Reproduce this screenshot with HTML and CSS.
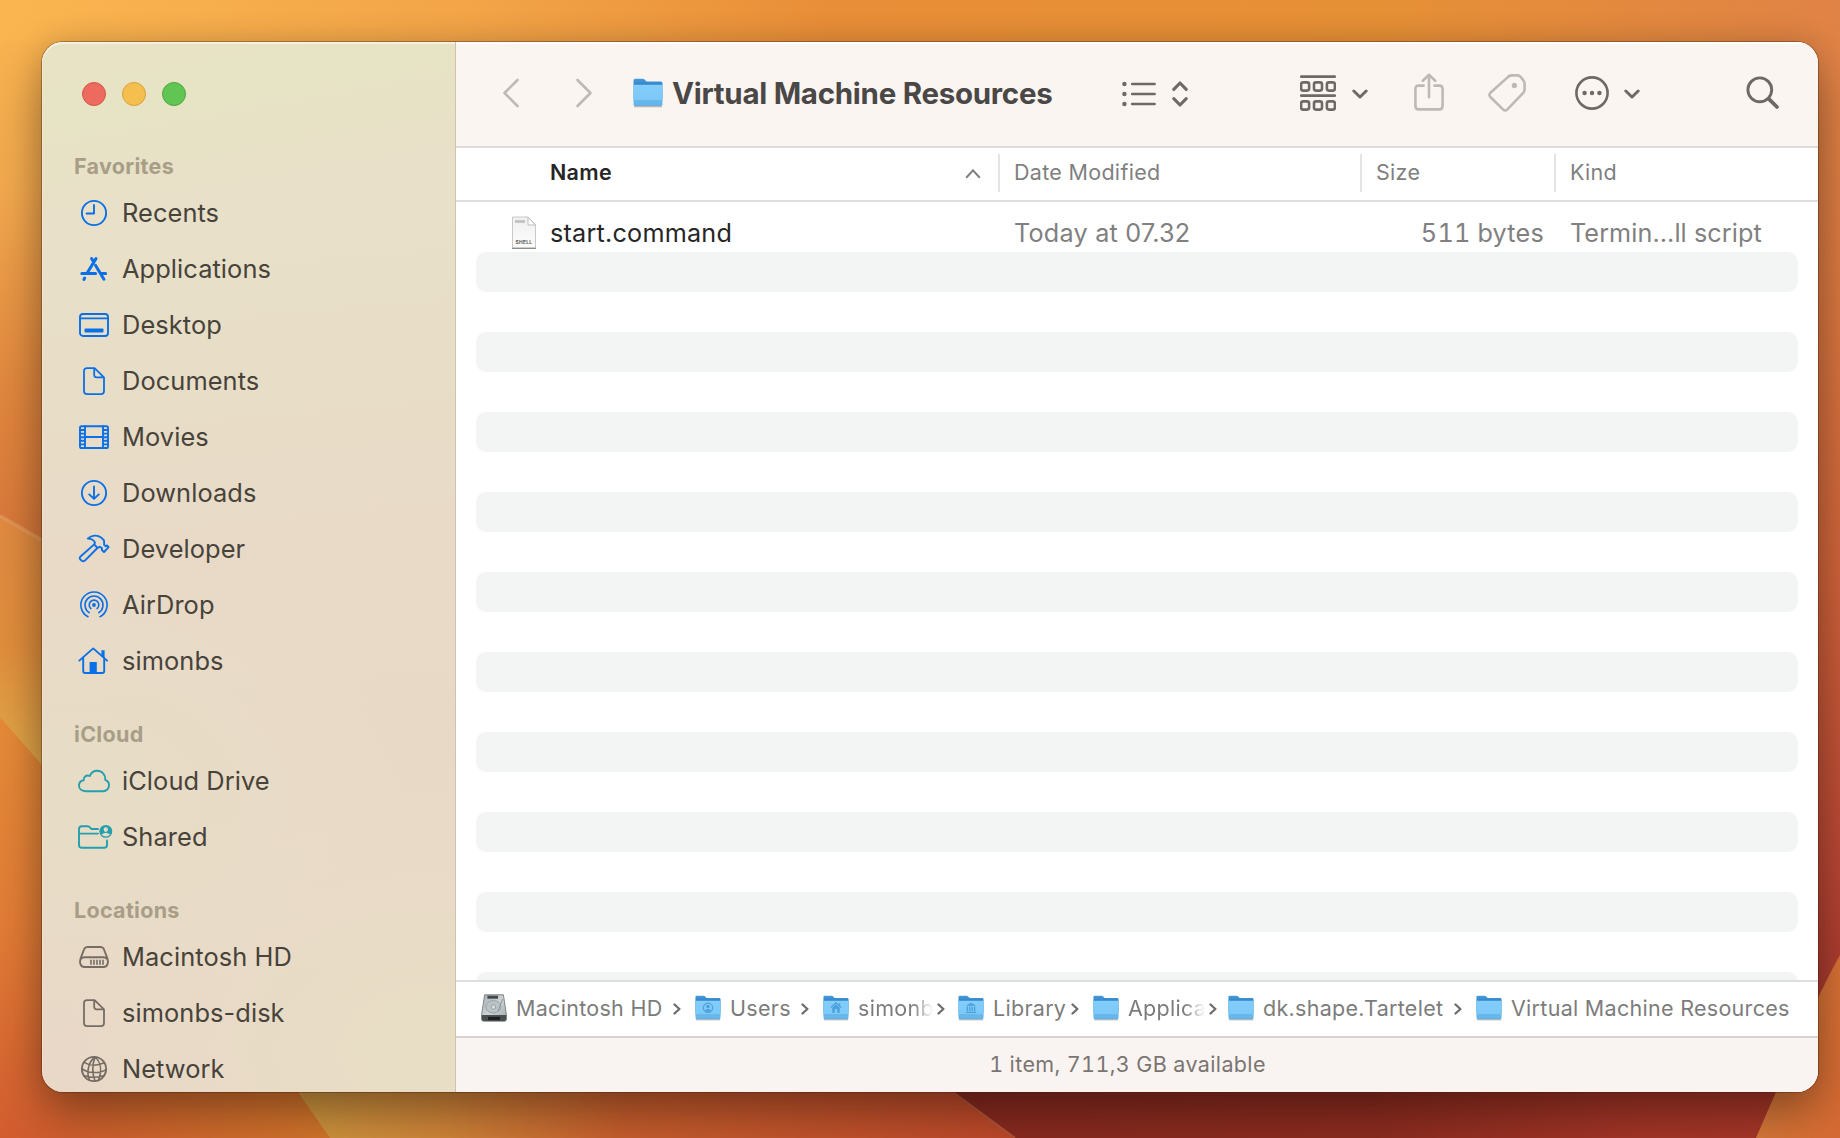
FILE: index.html
```html
<!DOCTYPE html>
<html lang="en">
<head>
<meta charset="utf-8">
<title>Virtual Machine Resources</title>
<link rel="stylesheet" href="styles.css">
</head>
<body>
<svg class="wallpaper" viewBox="0 0 1840 1138" preserveAspectRatio="none" aria-hidden="true">
  <defs>
    <linearGradient id="wp-top" x1="0" y1="0" x2="1840" y2="0" gradientUnits="userSpaceOnUse">
      <stop offset="0" stop-color="#fab550"/><stop offset=".25" stop-color="#f3a548"/><stop offset=".45" stop-color="#e88e38"/><stop offset=".75" stop-color="#e69036"/><stop offset="1" stop-color="#e08346"/>
    </linearGradient>
    <linearGradient id="wp-left" x1="0" y1="0" x2="0" y2="540" gradientUnits="userSpaceOnUse">
      <stop offset="0" stop-color="#fab550"/><stop offset=".35" stop-color="#f3a94e"/><stop offset=".7" stop-color="#e2893f"/><stop offset="1" stop-color="#d8783a"/>
    </linearGradient>
    <linearGradient id="wp-band" x1="0" y1="510" x2="0" y2="780" gradientUnits="userSpaceOnUse">
      <stop offset="0" stop-color="#e28a42"/><stop offset=".5" stop-color="#e08e3c"/><stop offset="1" stop-color="#e3ac4c"/>
    </linearGradient>
    <linearGradient id="wp-low" x1="0" y1="720" x2="0" y2="1138" gradientUnits="userSpaceOnUse">
      <stop offset="0" stop-color="#e68b38"/><stop offset=".5" stop-color="#e27c36"/><stop offset="1" stop-color="#d35d2f"/>
    </linearGradient>
    <linearGradient id="wp-lowx" x1="0" y1="0" x2="340" y2="0" gradientUnits="userSpaceOnUse">
      <stop offset=".1" stop-color="#d8792c" stop-opacity="0"/><stop offset="1" stop-color="#d8792c"/>
    </linearGradient>
    <linearGradient id="wp-gold" x1="300" y1="0" x2="1020" y2="0" gradientUnits="userSpaceOnUse">
      <stop offset="0" stop-color="#d49a40"/><stop offset=".2" stop-color="#d5883a"/><stop offset=".45" stop-color="#cc602e"/><stop offset="1" stop-color="#c24a2b"/>
    </linearGradient>
    <linearGradient id="wp-red" x1="950" y1="0" x2="1800" y2="0" gradientUnits="userSpaceOnUse">
      <stop offset="0" stop-color="#8c2b20"/><stop offset=".5" stop-color="#912d20"/><stop offset=".8" stop-color="#a83628"/><stop offset="1" stop-color="#ab3829"/>
    </linearGradient>
    <linearGradient id="wp-right" x1="0" y1="0" x2="0" y2="1138" gradientUnits="userSpaceOnUse">
      <stop offset="0" stop-color="#e28648"/><stop offset=".25" stop-color="#dd7a42"/><stop offset=".5" stop-color="#d2653b"/><stop offset=".75" stop-color="#bb4835"/><stop offset=".9" stop-color="#a8372e"/>
    </linearGradient>
    <linearGradient id="wp-orange" x1="1760" y1="1120" x2="1840" y2="1138" gradientUnits="userSpaceOnUse">
      <stop offset="0" stop-color="#dc7c3c"/><stop offset=".4" stop-color="#dc7436"/><stop offset="1" stop-color="#d86a34"/>
    </linearGradient>
  </defs>
  <rect width="1840" height="600" fill="url(#wp-top)"/>
  <path d="M0 42H60V600H0z" fill="url(#wp-left)"/>
  <path d="M1800 42H1840V1138H1800z" fill="url(#wp-right)"/>
  <path d="M0 515L42 539L120 590V900H0z" fill="url(#wp-band)"/>
  <path d="M0 516L42 540" stroke="#e6a266" stroke-opacity=".5" stroke-width="4"/>
  <path d="M0 717L42 765L300 1092L332 1138H0z" fill="url(#wp-low)"/>
  <path d="M0 1080H324L332 1138H0z" fill="url(#wp-lowx)"/>
  <path d="M270 1050L298 1092L330 1138H1100V1050z" fill="url(#wp-gold)"/>
  <path d="M900 1050L953 1092L1015 1138H1805V1050z" fill="url(#wp-red)"/>
  <path d="M953 1092L1015 1138" stroke="#b8583a" stroke-width="2"/>
  <path d="M1840 955C1815 1000 1790 1060 1756 1138H1840z" fill="url(#wp-orange)"/>
</svg>

<svg class="symbols" aria-hidden="true">
  <defs>
    <linearGradient id="folder-back" x1="0" y1="0" x2="0" y2="1"><stop offset="0" stop-color="#4a9cda"/><stop offset=".3" stop-color="#2f83c8"/></linearGradient>
    <linearGradient id="folder-front" x1="0" y1="0" x2="0" y2="1"><stop offset="0" stop-color="#82cdfa"/><stop offset=".75" stop-color="#7cc8f7"/><stop offset=".8" stop-color="#6ab9ec"/><stop offset="1" stop-color="#62b2e8"/></linearGradient>
    <linearGradient id="paper" x1="0" y1="0" x2="0" y2="1"><stop offset="0" stop-color="#f0f0f0"/><stop offset="1" stop-color="#fdfdfd"/></linearGradient>
    <linearGradient id="metal" x1="0" y1="0" x2="1" y2="1"><stop offset="0" stop-color="#a9b0b3"/><stop offset=".5" stop-color="#cdd3d6"/><stop offset="1" stop-color="#a2a9ad"/></linearGradient>
    <symbol id="folder" viewBox="0 0 28 28">
      <path d="M1 26.6H27" stroke="#8f8a88" stroke-opacity=".6" stroke-width="1.4"/>
      <path d="M.5 2.2Q.5.8 2 .8H9.2Q10.4.8 11.2 1.8L12.6 3.2H26Q27.5 3.2 27.5 4.6V20H.5z" fill="url(#folder-back)"/>
      <path d="M.5 6.2H27.5V24.6Q27.5 26.2 26 26.2H2Q.5 26.2.5 24.6z" fill="url(#folder-front)"/>
      <path d="M.5 21.4H27.5" stroke="#58a8df" stroke-width=".8"/>
    </symbol>
    <symbol id="chev-down" viewBox="0 0 16 10"><path d="M1.8 2L8 8L14.2 2" fill="none" stroke="currentColor" stroke-width="3" stroke-linecap="round" stroke-linejoin="round"/></symbol>
    <symbol id="crumb-sep" viewBox="0 0 8 12"><path d="M1.5 1.5L6.4 6L1.5 10.5" fill="none" stroke="currentColor" stroke-width="2.3" stroke-linecap="round" stroke-linejoin="round"/></symbol>
    <symbol id="doc" viewBox="0 0 32 32"><path d="M9.2 2.8H16.6L26 12V25.6Q26 28.8 23 28.8H9.2Q6 28.8 6 25.6V5.8Q6 2.8 9.2 2.8zM16.2 3V9.8Q16.2 12 18.4 12H26" transform="translate(0 .3)" fill="none" stroke="currentColor" stroke-width="1.8" stroke-linejoin="round"/></symbol>
  </defs>
</svg>

<main class="window">
  <aside class="sidebar">
    <div class="lights"><i class="light light-close"></i><i class="light light-min"></i><i class="light light-zoom"></i></div>

    <h2 class="group-title">Favorites</h2>
    <ul class="group blue">
      <li class="place"><svg class="icon" viewBox="0 0 32 32"><circle cx="16" cy="16" r="12.1"/><path d="M16 8V16.5H8.6"/></svg><span>Recents</span></li>
      <li class="place"><svg class="icon" viewBox="0 0 32 32"><path class="bold" d="M3.8 20.6H17.6M22.5 20.6H27.6M18 5.6L9.2 20M13.6 5.6L15.8 9M17.6 12.4L25.9 26.2M6.7 25L5.9 26.4"/></svg><span>Applications</span></li>
      <li class="place"><svg class="icon" viewBox="0 0 32 32"><rect x="2" y="5" width="28" height="22" rx="3"/><path d="M2 9.4H30"/><rect class="solid" x="6.5" y="19.4" width="19" height="4" rx="1"/></svg><span>Desktop</span></li>
      <li class="place"><svg class="icon"><use href="#doc"/></svg><span>Documents</span></li>
      <li class="place"><svg class="icon" viewBox="0 0 32 32"><rect x="2" y="5.2" width="28" height="21.8" rx="1.6"/><path d="M7 5V27M25 5V27M7 16H25M2 9H7M2 12.6H7M2 16.2H7M2 19.8H7M2 23.4H7M25 9H30M25 12.6H30M25 16.2H30M25 19.8H30M25 23.4H30"/></svg><span>Movies</span></li>
      <li class="place"><svg class="icon" viewBox="0 0 32 32"><circle cx="16" cy="16" r="12.1"/><path d="M16 9.5V21.6M11.2 17.4L16 21.9L20.8 17.4"/></svg><span>Downloads</span></li>
      <li class="place"><svg class="icon" viewBox="0 0 32 32"><path d="M9.8 5.6C13.6 1.8 19.6 1.8 23 4.4L26 7.4L26.2 12L27.8 13.2L29 12.4L30.6 14.2L26 19L23.9 17L24 15.2L21.8 13.8L19.4 15L7.4 27.2Q5.4 29.3 3.4 27.4L2.4 26.6Q.8 25 2.8 23.2L16.2 11.4L17 9.4C15.4 6.6 12.6 5.6 9.8 5.6zM16.2 11.4L19.6 15"/></svg><span>Developer</span></li>
      <li class="place"><svg class="icon" viewBox="0 0 32 32"><circle class="solid" cx="16" cy="16" r="1.9"/><path class="thin" d="M12.9 19.6A4.8 4.8 0 1 1 19.1 19.6M11.2 23.6A9 9 0 1 1 20.8 23.6M10 27.7A13.1 13.1 0 1 1 22 27.7"/></svg><span>AirDrop</span></li>
      <li class="place"><svg class="icon" viewBox="0 0 32 32"><path d="M1.3 15.6L15.2 3.4L29.1 15.6M5.2 13V26Q5.2 28 7.2 28H24.2Q26.2 28 26.2 26V13"/><path class="solid" d="M11.6 17H18.8V28H11.6zM23.4 5.2H26.6V13.4L23.4 10.6z"/></svg><span>simonbs</span></li>
    </ul>

    <h2 class="group-title">iCloud</h2>
    <ul class="group teal">
      <li class="place"><svg class="icon" viewBox="0 0 32 32"><path d="M7.6 26.2C3.6 26.2 1 23.8 1 20.6C1 17.6 3 15.6 5.6 15.2C5.4 11.6 9 9.4 11.8 11C13.2 7.6 15.8 5.8 19 5.8C24.2 5.8 27.6 9.8 27.2 14.8C29.6 15.6 31 17.8 31 20.2C31 23.6 28.4 26.2 25 26.2z"/></svg><span>iCloud Drive</span></li>
      <li class="place"><svg class="icon icon-wide" viewBox="0 0 36 32"><path d="M20 8H13.6L11 5.6Q10.4 5.2 9.6 5.2H3.8Q1 5.2 1 8V24Q1 26.8 3.8 26.8H26Q29 26.8 29 24V19.4M1 12.6H20"/><circle class="solid" cx="27.8" cy="10.4" r="6.4"/><path class="cut" d="M27.8 6.2a2.2 2.4 0 1 1 0 4.8a2.2 2.4 0 1 1 0-4.8zM23.4 13.8Q27.8 9.6 32.2 13.8Q27.8 17 23.4 13.8z"/></svg><span>Shared</span></li>
    </ul>

    <h2 class="group-title">Locations</h2>
    <ul class="group gray">
      <li class="place"><svg class="icon" viewBox="0 0 32 32"><path d="M9.2 6H22.8Q24.8 6 25.8 8L29.4 17.4C30.8 21.8 29.4 26 25.6 26H6.4C2.6 26 1.2 21.8 2.6 17.4L6.2 8Q7.2 6 9.2 6zM3 18Q4.4 16.2 6.6 16.2H25.4Q27.6 16.2 29 18"/><path class="thin" d="M13 19.2V23.2M16 19.2V23.2M19 19.2V23.2M22 19.2V23.2M25 19.2V23.2"/></svg><span>Macintosh HD</span></li>
      <li class="place"><svg class="icon"><use href="#doc"/></svg><span>simonbs-disk</span></li>
      <li class="place"><svg class="icon" viewBox="0 0 32 32"><circle cx="16" cy="16" r="12.1"/><path class="thin" d="M17 4C10 9 8.4 20 11.4 27M17 4C14 12 14.4 21 17 28M17 4C23 9 24 18 20.4 27.6M6 9.4C12 13 20 12.6 26.4 9.8M4 15.6C10 20.6 22 20.8 28 16.6M5.8 22.4C12 24.6 20 24.8 26.2 22.6"/></svg><span>Network</span></li>
    </ul>
  </aside>

  <section class="content">
    <header class="toolbar">
      <svg class="tb nav-back dim" viewBox="0 0 18 30"><path d="M15.5 2L2.5 15L15.5 28"/></svg>
      <svg class="tb nav-next dim" viewBox="0 0 18 30"><path d="M2.5 2L15.5 15L2.5 28"/></svg>
      <svg class="title-folder"><use href="#folder"/></svg>
      <h1 class="title"><span>Virtual Machine Resources</span></h1>
      <svg class="tb view-list" viewBox="0 0 34 26"><path d="M10.2 3H32.6M10.2 13H32.6M10.2 23H32.6"/><circle class="solid" cx="2.4" cy="3" r="2.2"/><circle class="solid" cx="2.4" cy="13" r="2.2"/><circle class="solid" cx="2.4" cy="23" r="2.2"/></svg>
      <svg class="tb view-updown heavy" viewBox="0 0 16 26"><path d="M1.8 8.4L8 2L14.2 8.4M1.8 17.6L8 24L14.2 17.6"/></svg>
      <svg class="tb view-group" viewBox="0 0 36 36"><path d="M1.2 1.6H34.8M1.2 20.6H34.8"/><rect x="1.1" y="7.4" width="8" height="8.2" rx="2"/><rect x="14" y="7.4" width="8" height="8.2" rx="2"/><rect x="26.9" y="7.4" width="8" height="8.2" rx="2"/><rect x="1.1" y="26.4" width="8" height="8.2" rx="2"/><rect x="14" y="26.4" width="8" height="8.2" rx="2"/><rect x="26.9" y="26.4" width="8" height="8.2" rx="2"/></svg>
      <svg class="tb chev chev-group"><use href="#chev-down"/></svg>
      <svg class="tb share dim" viewBox="0 0 30 38"><path d="M9.6 12.6H4.6Q1.4 12.6 1.4 15.8V33Q1.4 36.4 4.6 36.4H25.4Q28.6 36.4 28.6 33V15.8Q28.6 12.6 25.4 12.6H20.4M15 24.2V2M8.8 7.8L15 1.8L21.2 7.8"/></svg>
      <svg class="tb tag dim" viewBox="0 0 38 38"><path d="M19.6 3.4Q21.2 1.4 23.6 1.4H29.4Q31.4 1.4 32.6 2.8L35.4 6.4Q36.6 7.8 36.6 9.8V15.4Q36.6 17.6 35 19.2L19.4 35.4Q17.2 37.6 15 35.4L2.6 23.2Q.4 21 2.4 18.8z"/><circle class="solid" cx="26.4" cy="11.4" r="2.6"/></svg>
      <svg class="tb more" viewBox="0 0 34 34"><circle cx="17" cy="17" r="15.6"/><circle class="solid" cx="9.6" cy="17" r="2.2"/><circle class="solid" cx="17" cy="17" r="2.2"/><circle class="solid" cx="24.4" cy="17" r="2.2"/></svg>
      <svg class="tb chev chev-more"><use href="#chev-down"/></svg>
      <svg class="tb search" viewBox="0 0 34 34"><circle cx="13.8" cy="13.8" r="11.9"/><path class="handle" d="M22.8 22.8L31 31"/></svg>
    </header>

    <div class="cols head">
      <div class="col c-name"><span>Name</span><svg class="sort" viewBox="0 0 16 10"><path d="M1.2 8.8L8 1.4L14.8 8.8"/></svg></div>
      <div class="col c-date"><span>Date Modified</span></div>
      <div class="col c-size"><span>Size</span></div>
      <div class="col c-kind"><span>Kind</span></div>
    </div>

    <div class="list">
      <div class="cols row">
        <div class="c-name"><svg class="file" viewBox="0 0 26 34"><path d="M1.5 1H17L24.5 9V32H1.5z" fill="url(#paper)" stroke="#c9c9c9"/><path d="M1 32.4H25" stroke="#8e8e8e" stroke-width="1.4"/><path d="M17 1V9H24.5z" fill="#fff" stroke="#bdbdbd"/><path d="M4 5.5H14" stroke="#c4c4c4" stroke-width="3"/><text x="13" y="28" text-anchor="middle" class="file-tag">SHELL</text></svg><span>start.command</span></div>
        <div class="c-date"><span>Today at 07.32</span></div>
        <div class="c-size"><span>511 bytes</span></div>
        <div class="c-kind"><span>Termin...ll script</span></div>
      </div>
      <div class="row stripe"></div><div class="row"></div>
      <div class="row stripe"></div><div class="row"></div>
      <div class="row stripe"></div><div class="row"></div>
      <div class="row stripe"></div><div class="row"></div>
      <div class="row stripe"></div><div class="row"></div>
      <div class="row stripe"></div><div class="row"></div>
      <div class="row stripe"></div><div class="row"></div>
      <div class="row stripe"></div><div class="row"></div>
      <div class="row stripe"></div><div class="row"></div>
      <div class="row stripe"></div>
    </div>

    <nav class="pathbar">
      <div class="crumb cr-hd"><svg class="crumb-icon" viewBox="0 0 26 28"><path d="M3.6.8H22.4L25.4 20.6V25Q25.4 27.2 23.4 27.2H2.6Q.6 27.2.6 25V20.6z" fill="url(#metal)" stroke="#767d80" stroke-width=".9"/><path d="M.8 21H25.2V25Q25.2 27 23.4 27H2.6Q.8 27 .8 25z" fill="#4a4f51"/><path d="M6.4 3.2H17" stroke="#45494b" stroke-width="3"/><ellipse cx="12.4" cy="12.8" rx="7.6" ry="6.2" fill="#bcc3c6" stroke="#9aa2a6"/><circle cx="12.4" cy="13" r="2.3" fill="#d5dadc" stroke="#9aa2a6"/><path d="M17 17L21.6 5" stroke="#8d9599"/><path d="M7 24.4H19" stroke="#1c1e1f" stroke-width="3"/></svg><span>Macintosh HD</span><svg class="sep"><use href="#crumb-sep"/></svg></div>
      <div class="crumb cr-users"><svg class="crumb-icon" viewBox="0 0 28 28"><use href="#folder"/><circle cx="14" cy="13.8" r="5" fill="none" stroke="#4b9fdb" stroke-width="1.2"/><circle cx="14" cy="12.4" r="1.9" fill="#4b9fdb"/><path d="M10.6 16.6Q14 13.6 17.4 16.6Q14 19.8 10.6 16.6z" fill="#4b9fdb"/></svg><span>Users</span><svg class="sep"><use href="#crumb-sep"/></svg></div>
      <div class="crumb cr-clip"><svg class="crumb-icon" viewBox="0 0 28 28"><use href="#folder"/><path d="M8.4 13.6L14 8.6L19.6 13.6M17.8 11V8.8" fill="none" stroke="#4b9fdb" stroke-width="1.4"/><path d="M10 13.6L14 10.2L18 13.6V19H15.4V15H12.6V19H10z" fill="#4b9fdb"/></svg><span class="fade">simonb</span><svg class="sep"><use href="#crumb-sep"/></svg></div>
      <div class="crumb cr-clip"><svg class="crumb-icon" viewBox="0 0 28 28"><use href="#folder"/><path d="M8.4 11.6L14 8.4L19.6 11.6zM9.4 12.4H10.8V17.2H9.4zM12 12.4H13.4V17.2H12zM14.6 12.4H16V17.2H14.6zM17.2 12.4H18.6V17.2H17.2zM8.4 18H19.6V19.4H8.4z" fill="#4b9fdb"/></svg><span>Library</span><svg class="sep"><use href="#crumb-sep"/></svg></div>
      <div class="crumb cr-clip"><svg class="crumb-icon"><use href="#folder"/></svg><span class="fade">Applica</span><svg class="sep"><use href="#crumb-sep"/></svg></div>
      <div class="crumb cr-dk"><svg class="crumb-icon"><use href="#folder"/></svg><span>dk.shape.Tartelet</span><svg class="sep"><use href="#crumb-sep"/></svg></div>
      <div class="crumb"><svg class="crumb-icon"><use href="#folder"/></svg><span>Virtual Machine Resources</span></div>
    </nav>
    <footer class="status"><span>1 item, 711,3 GB available</span></footer>
  </section>
</main>
</body>
</html>
```
FILE: styles.css
```css
* { box-sizing: border-box; }
body {
  margin: 0;
  height: 1138px;
  padding: 42px 22px 46px 42px;
  display: flex;
  overflow: hidden;
  font-family: Inter, "Liberation Sans", sans-serif;
  white-space: nowrap;
}
h1, h2, ul { margin: 0; padding: 0; font-weight: inherit; }
svg { flex: none; display: block; }
.wallpaper { position: absolute; left: 0; top: 0; width: 1840px; height: 1138px; }
.symbols { position: absolute; width: 0; height: 0; }

.window {
  position: relative;
  flex: 1;
  display: flex;
  border-radius: 21px;
  box-shadow: 0 0 0 1px rgba(70, 30, 0, .35), 0 26px 50px rgba(0, 0, 0, .34), 0 0 30px rgba(0, 0, 0, .14);
}

/* Sidebar */
.sidebar {
  width: 414px;
  overflow: hidden;
  border-radius: 21px 0 0 21px;
  border-right: 1px solid #cfc3ad;
  box-shadow: inset 0 2px 0 rgba(255, 255, 255, .5), inset 1px 0 0 rgba(255, 255, 255, .25);
  background:
    linear-gradient(170deg, #e7e3c4 0, #e7e3c5 8%, rgba(232, 224, 200, 0) 16%),
    radial-gradient(ellipse 330px 230px at 8% 72%, #e7ddc6 0, rgba(231, 221, 198, 0) 100%),
    radial-gradient(ellipse 380px 260px at 95% 96%, #e8dec5 0, rgba(231, 221, 198, 0) 100%),
    linear-gradient(175deg, #e8e0c8 20%, #e8dac7 48%, #e9d8c8 100%);
}
.lights { height: 105px; padding: 40px 0 0 40px; display: flex; gap: 16px; }
.light { width: 24px; height: 24px; border-radius: 50%; border: 1px solid; }
.light-close { background: #ec6a5e; border-color: #d5544a; }
.light-min { background: #f4bf4f; border-color: #d8a03c; }
.light-zoom { background: #61c554; border-color: #4fa73c; }
.group-title {
  height: 38px; line-height: 39px; padding-left: 32px;
  font-size: 21.5px; font-weight: 700; letter-spacing: .3px; color: #a89e87;
}
.group { list-style: none; margin-bottom: 26px; }
.place { height: 56px; padding: 0 0 2px 36px; display: flex; align-items: center; gap: 12px; font-size: 25.4px; color: #47433b; letter-spacing: .08px; }
.icon { width: 32px; height: 32px; margin-top: 1px; fill: none; stroke: currentColor; stroke-width: 1.9; stroke-linecap: round; stroke-linejoin: round; overflow: visible; }
.icon-wide { width: 36px; margin-right: -4px; }
.blue .icon { color: #0a70e8; }
.teal .icon { color: #249fae; }
.gray .icon { color: #756d64; }
.icon .solid { fill: currentColor; stroke: none; }
.icon .cut { fill: #e7dcc6; stroke: none; }
.icon .bold { stroke-width: 3; }
.icon .thin { stroke-width: 1.6; }

/* Content */
.content { flex: 1; min-width: 0; display: flex; flex-direction: column; background: #fff; border-radius: 0 21px 21px 0; overflow: hidden; }
.toolbar {
  height: 106px; display: flex; align-items: center; padding: 0 38px 2px 46px;
  background: #fbf5f2; border-bottom: 2px solid #dcd9d9; box-shadow: inset 0 2px 0 #fff;
}
.tb { fill: none; stroke: currentColor; stroke-width: 2.6; stroke-linecap: round; stroke-linejoin: round; color: #6f6965; }
.tb .solid { fill: currentColor; stroke: none; }
.dim { color: #bfb9b6; }
.heavy { stroke-width: 3.1; }
.nav-back { width: 18px; height: 30px; }
.nav-next { width: 18px; height: 30px; margin-left: 55px; }
.title-folder { width: 30px; height: 30px; margin-left: 40px; }
.title { width: 459px; padding-left: 9px; font-size: 29.5px; font-weight: 700; letter-spacing: -.28px; color: #4a4846; }
.view-list { width: 34px; height: 26px; margin-top: 2px; }
.view-updown { width: 16px; height: 26px; margin: 2px 0 0 16px; }
.view-group { width: 36px; height: 36px; margin-left: 112px; }
.chev { width: 16px; height: 10px; margin-top: 2px; }
.chev-group { margin-left: 16px; }
.share { width: 30px; height: 38px; margin-left: 46px; margin-bottom: 3px; }
.tag { width: 38px; height: 38px; margin-left: 44px; }
.more { width: 34px; height: 34px; margin-left: 49px; }
.chev-more { margin-left: 15px; }
.search { width: 34px; height: 34px; margin-left: auto; stroke-width: 2.9; }
.search .handle { stroke-width: 3.8; }

.cols { display: grid; grid-template-columns: 544px 362px 194px 1fr; }
.head { height: 54px; border-bottom: 2px solid #dedede; font-size: 21.5px; letter-spacing: .3px; color: #7f7f7f; align-items: start; padding-top: 6px; }
.col { height: 38px; display: flex; align-items: center; border-right: 2px solid #e4e4e4; padding: 0 0 2px 14px; }
.col.c-name { padding: 0 17px 2px 94px; justify-content: space-between; font-weight: 600; color: #262626; }
.col.c-kind { border: 0; }
.sort { width: 16px; height: 10px; margin-top: 4px; fill: none; stroke: #7f7f7f; stroke-width: 2; }

.list { flex: 1; min-height: 0; overflow: hidden; padding: 10px 20px 0; }
.row { height: 40px; }
.row.cols { margin: 0 -20px; padding-top: 2px; align-items: center; font-size: 25.2px; letter-spacing: .22px; color: #808080; }
.row .c-name { display: flex; align-items: center; padding-left: 55px; color: #262626; }
.file { width: 26px; height: 34px; margin: -1px 13px 0 0; }
.file-tag { font-size: 5px; font-weight: 700; fill: #555; }
.row .c-date { padding-left: 14px; }
.row .c-size { padding-right: 12px; text-align: right; font-variant-numeric: tabular-nums; }
.row .c-kind { padding-left: 14px; letter-spacing: .08px; }
.stripe { background: #f3f5f4; border-radius: 10px; }

.pathbar { height: 58px; border-top: 2px solid #dedede; border-bottom: 2px solid #d8d2cf; display: flex; padding: 0 0 2px 25px; font-size: 21.5px; letter-spacing: .29px; color: #7c7c7c; }
.crumb { display: flex; align-items: center; gap: 9px; }
.crumb-icon { width: 26px; height: 28px; }
.sep { width: 8px; height: 12px; margin: 2px 14px 0 auto; color: #6c6c6c; }
.cr-hd { width: 214px; }
.cr-users { width: 128px; }
.cr-clip { width: 135px; }
.cr-clip span { margin-right: -6px; }
.cr-dk { width: 248px; }
.fade { mask-image: linear-gradient(90deg, #000 72%, rgba(0, 0, 0, .06) 97%); }
.status { height: 54px; background: #f9f4f1; display: flex; align-items: center; justify-content: center; padding: 0 19px 2px 0; font-size: 21.5px; letter-spacing: .37px; color: #7b7571; }
.status span { font-variant-numeric: tabular-nums; }
```
